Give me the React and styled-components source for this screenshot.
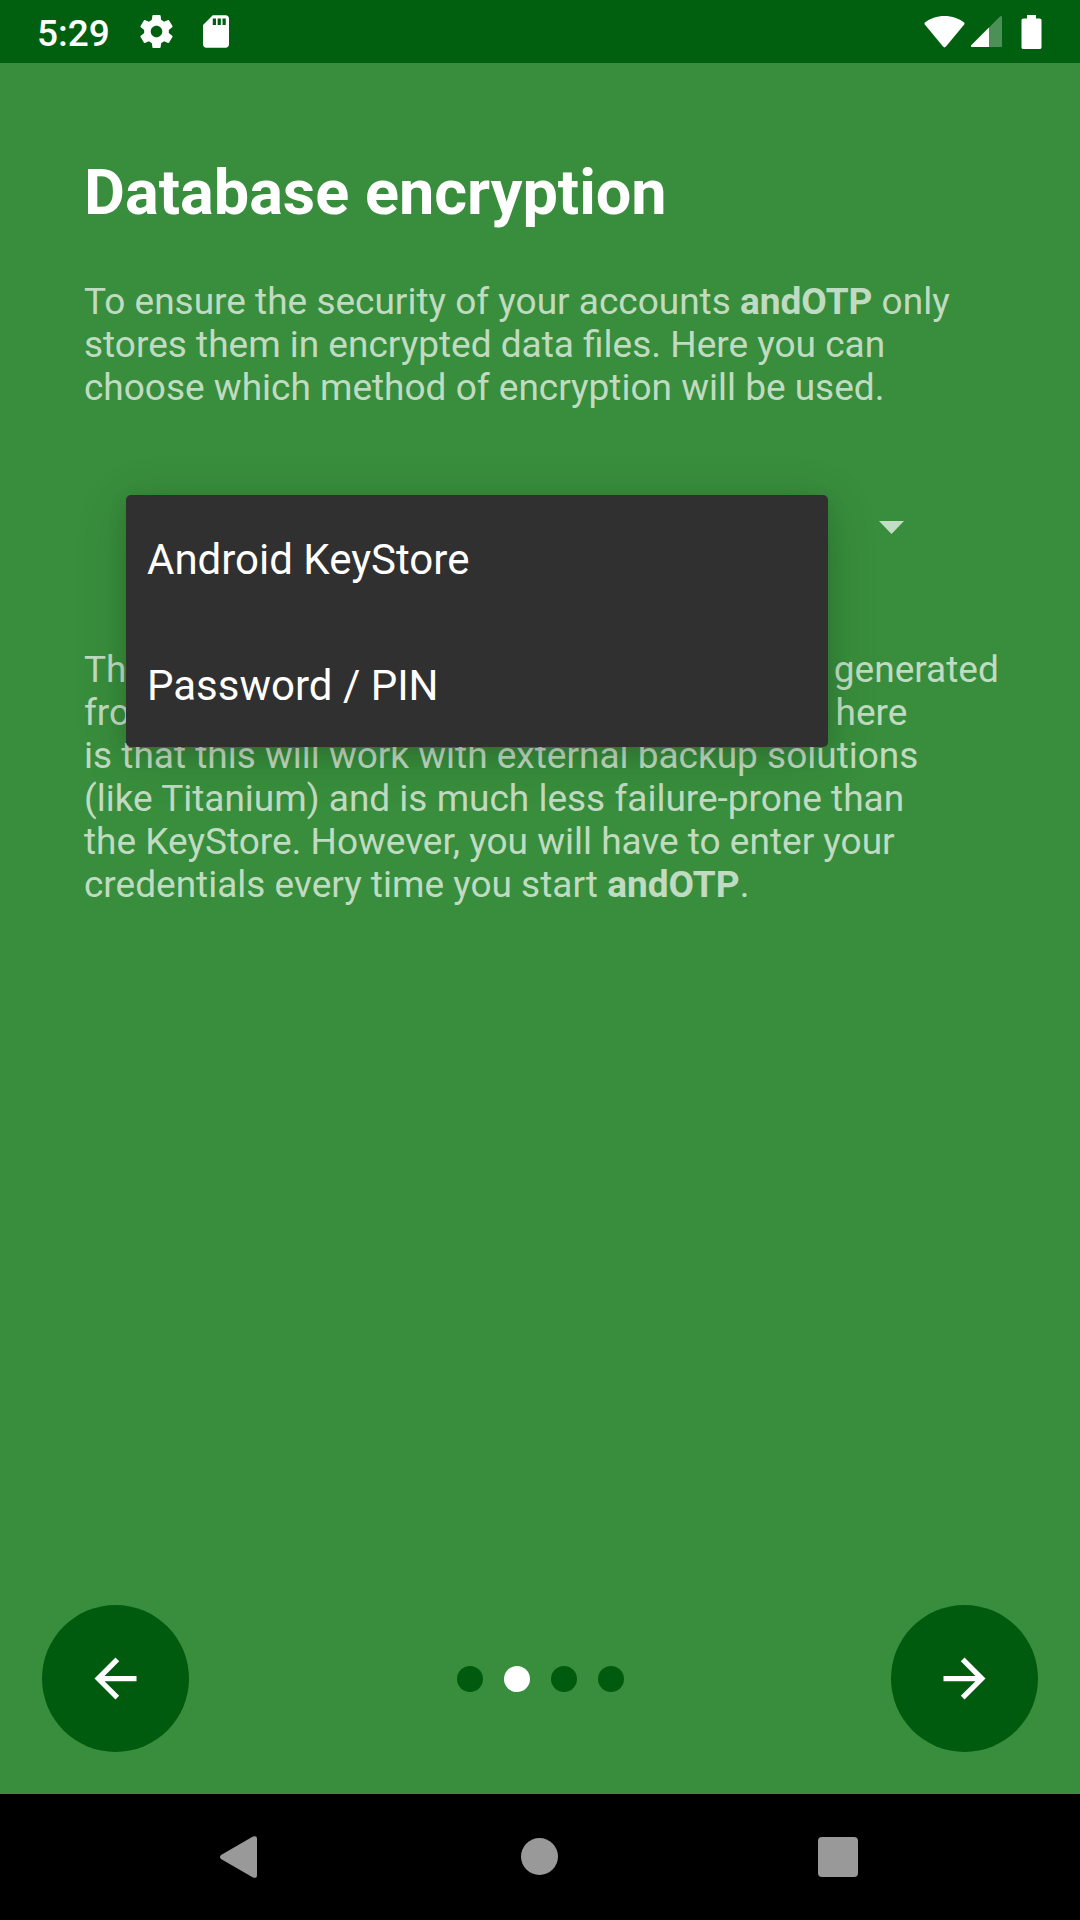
import React from "react";
import styled, { createGlobalStyle } from "styled-components";

const GlobalStyle = createGlobalStyle`
  *, *::before, *::after { box-sizing: border-box; }
  body {
    margin: 0;
    background: #388e3c;
    font-family: Roboto, "Noto Sans", sans-serif;
  }
`;

const Screen = styled.div`
  display: flex;
  flex-direction: column;
  min-height: 100vh;
  background: #388e3c;
  color: #fff;
`;

const StatusBar = styled.header`
  display: flex;
  align-items: center;
  justify-content: space-between;
  height: 63px;
  padding: 0 28px 0 37px;
  background: #00600f;
`;

const StatusGroup = styled.div`
  display: flex;
  align-items: center;
  gap: ${(p) => p.$gap}px;
`;

const Clock = styled.time`
  font-size: 37px;
  line-height: 43px;
  font-weight: 500;
  padding-top: 4px;
`;

const Icon = styled.svg`
  display: block;
  flex: none;
  width: ${(p) => p.$w}px;
  height: ${(p) => p.$h}px;
  fill: currentColor;
`;

const Content = styled.main`
  flex: 1;
  padding: 93px 84px 0;
`;

const Title = styled.h1`
  margin: 0 0 50px;
  font-size: 63px;
  line-height: 74px;
  font-weight: 700;
`;

const Description = styled.p`
  margin: 0;
  font-size: 37px;
  line-height: 43px;
  color: rgba(255, 255, 255, 0.7);
  white-space: nowrap;
`;

const Field = styled.div`
  position: relative;
  display: flex;
  align-items: center;
  justify-content: flex-end;
  height: 126px;
  margin: 55px 42px 58px;
  padding-right: 50px;
`;

const CaretButton = styled.button`
  padding: 0;
  border: 0;
  background: transparent;
  color: rgba(255, 255, 255, 0.7);
`;

const Popup = styled.div`
  position: absolute;
  z-index: 1;
  top: 31px;
  left: 0;
  right: 126px;
  overflow: hidden;
  background: #303030;
  border-radius: 5px;
  box-shadow: 0 10px 52px rgba(0, 0, 0, 0.16), 0 6px 20px rgba(0, 0, 0, 0.1);
`;

const MethodSelect = styled.select`
  display: block;
  width: 100%;
  height: 252px;
  padding: 0;
  border: 0;
  outline: 0;
  overflow: hidden;
  appearance: none;
  background: transparent;
  color: #fff;
  font: inherit;
  font-size: 42px;
`;

const Method = styled.option`
  height: 126px;
  padding: 40px 21px 36px;
  color: #fff;
  font-size: 42px;
  line-height: 50px;
`;

const Footer = styled.footer`
  display: flex;
  align-items: center;
  justify-content: space-between;
  padding: 0 42px 42px;
`;

const RoundButton = styled.button`
  display: flex;
  align-items: center;
  justify-content: center;
  width: 147px;
  height: 147px;
  padding: 0;
  border: 0;
  border-radius: 50%;
  background: #005b0e;
  color: #fff;
`;

const Dots = styled.div`
  display: flex;
  gap: 21px;
`;

const Dot = styled.span`
  width: 26px;
  height: 26px;
  border-radius: 50%;
  background: ${(p) => (p.$active ? "#fff" : "#005b0e")};
`;

const NavBar = styled.nav`
  display: flex;
  justify-content: center;
  height: 126px;
  background: #000;
`;

const NavButton = styled.button`
  display: flex;
  align-items: center;
  justify-content: center;
  width: 300px;
  padding: 0;
  border: 0;
  background: transparent;
  color: #999;
`;

const METHODS = ["Android KeyStore", "Password / PIN"];

export default function App() {
  return (
    <>
      <GlobalStyle />
      <Screen>
        <StatusBar>
          <StatusGroup $gap={30}>
            <Clock>5:29</Clock>
            <Icon $w={33} $h={33} viewBox="2 2 20 20" aria-hidden="true">
              <path d="M19.43 12.98c.04-.32.07-.64.07-.98s-.03-.66-.07-.98l2.11-1.65c.19-.15.24-.42.12-.64l-2-3.46c-.12-.22-.39-.3-.61-.22l-2.49 1c-.52-.4-1.08-.73-1.69-.98l-.38-2.65C14.46 2.18 14.25 2 14 2h-4c-.25 0-.46.18-.49.42l-.38 2.65c-.61.25-1.17.59-1.69.98l-2.49-1c-.23-.09-.49 0-.61.22l-2 3.46c-.13.22-.07.49.12.64l2.11 1.65c-.04.32-.07.65-.07.98s.03.66.07.98l-2.11 1.65c-.19.15-.24.42-.12.64l2 3.46c.12.22.39.3.61.22l2.49-1c.52.4 1.08.73 1.69.98l.38 2.65c.03.24.24.42.49.42h4c.25 0 .46-.18.49-.42l.38-2.65c.61-.25 1.17-.59 1.69-.98l2.49 1c.23.09.49 0 .61-.22l2-3.46c.12-.22.07-.49-.12-.64l-2.11-1.65zM12 15.5c-1.93 0-3.5-1.57-3.5-3.5s1.57-3.5 3.5-3.5 3.5 1.57 3.5 3.5-1.57 3.5-3.5 3.5z" />
            </Icon>
            <Icon $w={26} $h={33} viewBox="4 2 16 20" aria-hidden="true">
              <path d="M18 2h-8L4.02 8 4 20c0 1.1.9 2 2 2h12c1.1 0 2-.9 2-2V4c0-1.1-.9-2-2-2zm-6 6h-2V4h2v4zm3 0h-2V4h2v4zm3 0h-2V4h2v4z" />
            </Icon>
          </StatusGroup>
          <StatusGroup $gap={6}>
            <Icon $w={41} $h={34} viewBox="0 0 41 34" aria-hidden="true">
              <path d="M20.5 1C13 1 6 3.500 1 7.400Q0 8.400.8 9.400L19 31.600Q20.500 33.200 22 31.600L40.200 9.400Q41 8.400 40 7.400C35 3.500 28 1 20.500 1Z" />
            </Icon>
            <Icon $w={31} $h={31} viewBox="0 0 31 31" aria-hidden="true">
              <path
                opacity="0.3"
                d="M0 29.500L29 .5Q31-.6 31 1.500V31H1Q-.6 30.500 0 29.500Z"
              />
              <path d="M18 11.500V31H1Q-.6 30.500 0 29.500Z" />
            </Icon>
            <Icon $w={44} $h={34} viewBox="0 0 44 34" aria-hidden="true">
              <path d="M19 0h9v3.500h3.500Q33.500 3.500 33.500 5v27.500q0 1.500-2 1.500h-16q-2 0-2-1.500V5q0-1.500 2-1.500H19z" />
            </Icon>
          </StatusGroup>
        </StatusBar>

        <Content>
          <Title>Database encryption</Title>
          <Description>
            To ensure the security of your accounts <b>andOTP</b> only
            <br />
            stores them in encrypted data files. Here you can
            <br />
            choose which method of encryption will be used.
          </Description>

          <Field>
            <CaretButton type="button" aria-label="Toggle encryption methods">
              <Icon $w={25} $h={13} viewBox="0 0 25 13">
                <path d="M0 0h25L12.500 13z" />
              </Icon>
            </CaretButton>
            <Popup>
              <MethodSelect size={2} aria-label="Encryption method">
                {METHODS.map((name) => (
                  <Method key={name} value={name}>
                    {name}
                  </Method>
                ))}
              </MethodSelect>
            </Popup>
          </Field>

          <Description>
            The data is encrypted with the encryption key generated
            <br />
            from a password or PIN. The main advantage here
            <br />
            is that this will work with external backup solutions
            <br />
            (like Titanium) and is much less failure-prone than
            <br />
            the KeyStore. However, you will have to enter your
            <br />
            credentials every time you start <b>andOTP</b>.
          </Description>
        </Content>

        <Footer>
          <RoundButton type="button" aria-label="Back">
            <Icon $w={63} $h={63} viewBox="0 0 24 24">
              <path d="M20 11H7.830l5.590-5.590L12 4l-8 8 8 8 1.410-1.410L7.830 13H20v-2z" />
            </Icon>
          </RoundButton>
          <Dots>
            {[0, 1, 2, 3].map((i) => (
              <Dot key={i} $active={i === 1} />
            ))}
          </Dots>
          <RoundButton type="button" aria-label="Next">
            <Icon $w={63} $h={63} viewBox="0 0 24 24">
              <path d="M12 4l-1.410 1.410L16.170 11H4v2h12.170l-5.580 5.590L12 20l8-8z" />
            </Icon>
          </RoundButton>
        </Footer>

        <NavBar>
          <NavButton type="button" aria-label="System back">
            <Icon $w={40} $h={42} viewBox="0 0 40 42">
              <path d="M1 19L33 .6Q37-1 37 3V39Q37 43 33 41.400L1 23Q-1 21 1 19Z" />
            </Icon>
          </NavButton>
          <NavButton type="button" aria-label="Home">
            <Icon $w={38} $h={38} viewBox="0 0 38 38">
              <circle cx="18.500" cy="18.500" r="18.500" />
            </Icon>
          </NavButton>
          <NavButton type="button" aria-label="Recent apps">
            <Icon $w={44} $h={40} viewBox="0 0 44 40">
              <rect width="40" height="40" rx="4" />
            </Icon>
          </NavButton>
        </NavBar>
      </Screen>
    </>
  );
}
